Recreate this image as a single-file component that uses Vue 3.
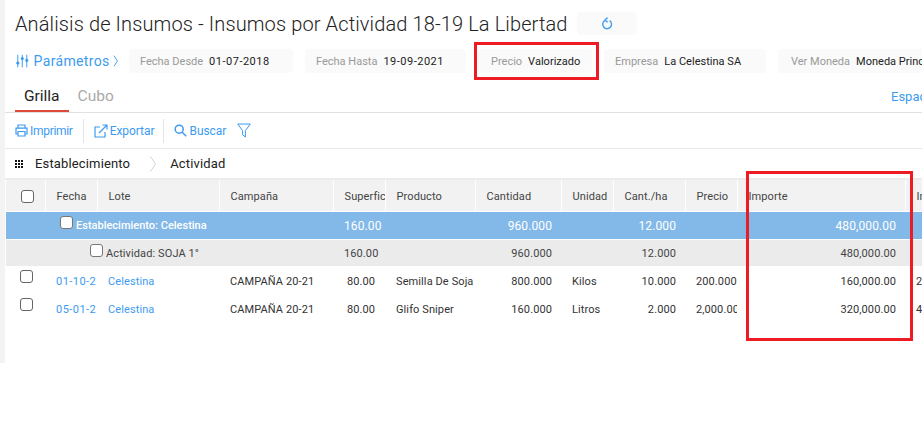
<script setup>
const columns = [39, 52, 122, 114, 52, 90, 86, 52, 72, 52, 168, 120]
const headers = ['Fecha', 'Lote', 'Campaña', 'Superfic', 'Producto', 'Cantidad', 'Unidad', 'Cant./ha', 'Precio', 'Importe', 'In']
const chips = [
  { label: 'Fecha Desde', value: '01-07-2018', w: 164, pad: 11, date: true },
  { label: 'Fecha Hasta', value: '19-09-2021', w: 161, pad: 11, date: true },
  { label: 'Precio', value: 'Valorizado', w: 114, pad: 13 },
  { label: 'Empresa', value: 'La Celestina SA', w: 162, pad: 11 },
  { label: 'Ver Moneda', value: 'Moneda Princ', w: 170, pad: 13 }
]
const rows = [
  { fecha: '01-10-2', campana: 'CAMPAÑA 20-21', sup: '80.00', prod: 'Semilla De Soja', cant: '800.000', uni: 'Kilos', ha: '10.000', precio: '200.000', imp: '160,000.00', ext: '2' },
  { fecha: '05-01-2', campana: 'CAMPAÑA 20-21', sup: '80.00', prod: 'Glifo Sniper', cant: '160.000', uni: 'Litros', ha: '2.000', precio: '2,000.00', imp: '320,000.00', ext: '4' }
]
</script>

<template>
  <div class="shell">
    <header class="title-row">
      <h1>Análisis de Insumos - Insumos por Actividad 18-19 La Libertad</h1>
      <button class="refresh" aria-label="Actualizar">
        <svg width="12" height="13" viewBox="0 0 12 13" fill="none" stroke="#4aa3f0" stroke-width="1.5">
          <path d="M4 3.4A4.4 4.4 0 1 0 8.6 3.6" />
          <path d="M6.6 0.6 3.8 3.3 6.8 5.2" />
        </svg>
      </button>
    </header>

    <section class="params">
      <a class="params-link">
        <svg width="14" height="16" viewBox="0 0 14 16" fill="#3d9bf0" stroke="#3d9bf0" stroke-width="1.1">
          <path d="M2 1v14M7 1v14M12 1v14" fill="none" />
          <rect x="0.8" y="9" width="2.4" height="2.6" rx="1" />
          <rect x="5.8" y="4" width="2.4" height="2.6" rx="1" />
          <rect x="10.8" y="6" width="2.4" height="2.6" rx="1" />
        </svg>
        <span class="params-text">Parámetros</span>
        <svg width="6" height="14" viewBox="0 0 6 14" fill="none" stroke="#3d9bf0" stroke-width="1"><path d="M1 1l4 6-4 6" /></svg>
      </a>
      <div v-for="c in chips" :key="c.label" class="chip" :style="{ flexBasis: c.w + 'px', paddingLeft: c.pad + 'px' }">
        <span class="chip-label">{{ c.label }}</span><span class="chip-value" :class="{ date: c.date }">{{ c.value }}</span>
      </div>
    </section>

    <nav class="tabs">
      <a class="tab active">Grilla</a>
      <a class="tab">Cubo</a>
      <a class="space">Espac</a>
    </nav>

    <div class="toolbar">
      <a class="tool tool-first">
        <svg width="13" height="13" viewBox="0 0 13 13" fill="none" stroke="#3d9bf0" stroke-width="1.2">
          <path d="M3 4V1h7v3M3 10H1V4.2h11V10h-2" />
          <path d="M3 7.5h7v4.5H3z" />
        </svg>
        <span>Imprimir</span>
      </a>
      <a class="tool tool-second">
        <svg width="14" height="14" viewBox="0 0 14 14" fill="none" stroke="#3d9bf0" stroke-width="1.2">
          <path d="M6 3H1v10h10V8" />
          <path d="M5 9l8-8M8.5 1H13v4.5" />
        </svg>
        <span>Exportar</span>
      </a>
      <a class="tool tool-third">
        <svg width="13" height="13" viewBox="0 0 13 13" fill="none" stroke="#3d9bf0" stroke-width="1.5">
          <circle cx="5.2" cy="5.2" r="4" />
          <path d="M8.2 8.2l4 4" />
        </svg>
        <span>Buscar</span>
      </a>
      <svg class="funnel" width="14" height="15" viewBox="0 0 14 15" fill="none" stroke="#3d9bf0" stroke-width="1">
        <path d="M.7 1h12.6L8.4 7.6V14L5.6 11.8V7.6z" />
      </svg>
    </div>

    <div class="groups">
      <span class="grip"><i v-for="n in 9" :key="n"></i></span>
      <span class="group-one">Establecimiento</span>
      <svg class="group-sep" width="6" height="16" viewBox="0 0 6 16" fill="none" stroke="#d4d4d4" stroke-width="1"><path d="M.5 .5l5 7.5-5 7.5" /></svg>
      <span>Actividad</span>
    </div>

    <table class="grid">
      <colgroup>
        <col v-for="(w, i) in columns" :key="i" :style="{ width: w + 'px' }" />
      </colgroup>
      <thead>
        <tr>
          <th class="check-cell"><input type="checkbox" class="cb" /></th>
          <th v-for="(h, i) in headers" :key="i">{{ h }}</th>
          <th></th>
        </tr>
      </thead>
      <tbody>
        <tr class="lvl1">
          <td colspan="4" class="group-cell"><div class="group-inner"><input type="checkbox" class="cb" /><span>Establecimiento: Celestina</span></div></td>
          <td class="center">160.00</td>
          <td></td>
          <td class="num">960.000</td>
          <td></td>
          <td class="num">12.000</td>
          <td></td>
          <td class="num">480,000.00</td>
          <td colspan="2"></td>
        </tr>
        <tr class="lvl2">
          <td colspan="4" class="group-cell"><div class="group-inner"><input type="checkbox" class="cb" /><span>Actividad: SOJA 1°</span></div></td>
          <td class="center">160.00</td>
          <td></td>
          <td class="num">960.000</td>
          <td></td>
          <td class="num">12.000</td>
          <td></td>
          <td class="num">480,000.00</td>
          <td colspan="2"></td>
        </tr>
        <tr v-for="r in rows" :key="r.fecha" class="row">
          <td class="check-cell"><input type="checkbox" class="cb" /></td>
          <td class="link date-cell">{{ r.fecha }}</td>
          <td class="link">Celestina</td>
          <td>{{ r.campana }}</td>
          <td class="center">{{ r.sup }}</td>
          <td>{{ r.prod }}</td>
          <td class="num">{{ r.cant }}</td>
          <td>{{ r.uni }}</td>
          <td class="num">{{ r.ha }}</td>
          <td>{{ r.precio }}</td>
          <td class="num">{{ r.imp }}</td>
          <td>{{ r.ext }}</td>
          <td></td>
        </tr>
      </tbody>
    </table>

    <div class="mark mark-price"></div>
    <div class="mark mark-import"></div>
  </div>
</template>

<style>
html, body { margin: 0; background: #fff; overflow: hidden; }
</style>

<style scoped>
.shell {
  position: relative;
  box-sizing: border-box;
  width: 922px;
  height: 363px;
  border-left: 5px solid #f3f3f3;
  overflow: hidden;
  font-family: Roboto, "Liberation Sans", sans-serif;
  font-size: 11px;
  color: #333;
}
.title-row { display: flex; align-items: flex-start; padding: 12px 0 0 10px; height: 37px; box-sizing: border-box; }
h1 { margin: 0; font-size: 20px; line-height: 25px; font-weight: 300; letter-spacing: .12px; color: #222; white-space: nowrap; }
.refresh { margin-left: 9px; width: 60px; height: 23px; border: 0; border-radius: 4px; background: #fafafa; display: flex; align-items: center; justify-content: center; padding: 0; }
.params { display: flex; gap: 12px; height: 24px; margin-top: 12px; padding-left: 11px; align-items: center; white-space: nowrap; }
.params-link { display: flex; align-items: center; gap: 4px; width: 102px; margin-right: -1px; flex: none; color: #3d9bf0; font-size: 14px; letter-spacing: .35px; }
.params-text { margin: 0 -1px 0 1px; }
.chip { flex: none; box-sizing: border-box; height: 24px; border-radius: 4px; background: #fafafa; display: flex; align-items: center; gap: 6px; font-size: 11px; overflow: hidden; }
.chip-label { color: #999; }
.chip-value { color: #222; letter-spacing: .02px; }
.chip-value.date { letter-spacing: .5px; }
.tabs { position: relative; display: flex; height: 27px; margin-top: 12px; padding-left: 10px; border-bottom: 1px solid #e0e0e0; font-size: 15.5px; }
.tab { height: 27px; box-sizing: border-box; color: #aaa; padding: 0 9px; line-height: 23px; }
.tab.active { color: #222; border-bottom: 2px solid #e04a3a; }
.space { margin-left: auto; margin-right: -26px; width: 57px; color: #3d9bf0; font-size: 13px; line-height: 24px; white-space: nowrap; overflow: hidden; }
.toolbar { display: flex; align-items: center; height: 35px; padding-left: 10px; border-bottom: 1px solid #e8e8e8; color: #3d9bf0; font-size: 12px; }
.tool { display: flex; align-items: center; gap: 3px; height: 24px; }
.tool-first { padding-right: 10px; border-right: 1px solid #e4e4e4; letter-spacing: -.3px; }
.tool-first svg { margin-right: -1px; }
.tool-second { padding: 0 9px 0 10px; border-right: 1px solid #e4e4e4; letter-spacing: -.05px; }
.tool-second svg { margin-right: -1px; }
.tool-third { padding-left: 10px; letter-spacing: -.05px; }
.tool-third svg { margin-right: -1px; }
.funnel { margin-left: 11px; }
.groups { display: flex; align-items: center; height: 29px; padding-left: 10px; border-bottom: 2px solid #ececec; color: #222; font-size: 13px; letter-spacing: .15px; white-space: nowrap; }
.grip { display: grid; grid-template-columns: repeat(3, 2px); gap: 1px; margin-right: 12px; }
.grip i { width: 2px; height: 2px; background: #111; }
.group-sep { margin: 0 14px 0 20px; }
.grid { table-layout: fixed; border-collapse: collapse; width: 1019px; margin-left: 1px; }
th, td { box-sizing: border-box; padding: 1px 9px 0 11px; white-space: nowrap; overflow: hidden; text-align: left; font-weight: 400; letter-spacing: .1px; }
th { height: 31px; padding-top: 3px; background: #f2f2f2; border-right: 1px solid #fff; border-bottom: 1px solid #fff; color: #444; }
.check-cell { padding: 0; }
th.check-cell { padding: 0; }
.cb { appearance: none; -webkit-appearance: none; display: block; box-sizing: border-box; width: 13px; height: 13px; margin: 0; border: 1px solid #666; border-radius: 3px; background: #fff; }
th .cb { margin: 2px 0 0 15px; }
.lvl1 td { height: 28px; background: #83b9e8; color: #fff; font-size: 12px; border-bottom: 1px solid #fff; }
.lvl2 td { height: 27px; background: #ebebeb; color: #444; }
.group-cell { padding: 1px 0 0; }
.lvl1 .group-cell, .lvl2 .group-cell { font-size: 11px; }
.group-inner { display: flex; align-items: flex-start; }
.group-inner .cb { flex: none; margin: -3px 3px 0 0; border-color: #777; }
.lvl1 .group-cell { padding-left: 54px; font-weight: 500; letter-spacing: 0; }
.lvl2 .group-cell { padding-left: 84px; }
.row td { height: 28px; padding-top: 3px; color: #333; }
.row td.check-cell { padding-top: 0; }
.row .check-cell .cb { margin: -7px 0 0 14px; }
.center { text-align: center; padding: 1px 7px 0 11px; }
.num { text-align: right; }
.link { color: #3d9bf0 !important; }
.date-cell { letter-spacing: .45px; }
.mark { position: absolute; box-sizing: border-box; border: 3px solid #ed1c24; }
.mark-price { left: 469px; top: 42px; width: 125px; height: 38px; }
.mark-import { left: 741px; top: 171px; width: 167px; height: 170px; }
</style>
